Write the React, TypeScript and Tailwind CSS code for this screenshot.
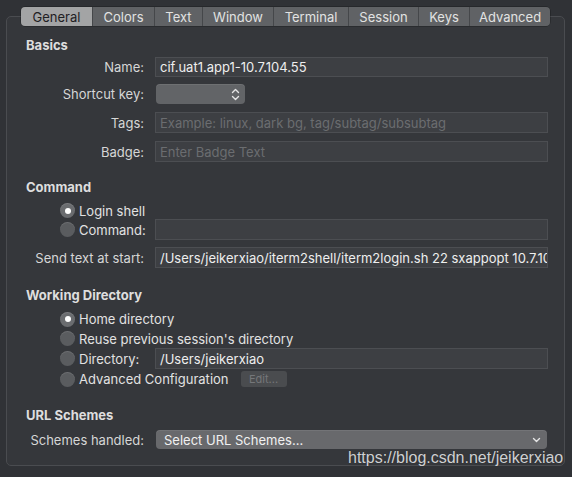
import React from "react";

const tabs: { name: string; w: string; active?: boolean }[] = [
  { name: "General", w: "w-[71px]", active: true },
  { name: "Colors", w: "w-[62px]" },
  { name: "Text", w: "w-[48px]" },
  { name: "Window", w: "w-[71px]" },
  { name: "Terminal", w: "w-[75px]" },
  { name: "Session", w: "w-[70px]" },
  { name: "Keys", w: "w-[51px]" },
  { name: "Advanced", w: "w-[81px]" },
];

function Radio({ checked }: { checked?: boolean }) {
  return (
    <div
      className={`w-[15px] h-[15px] rounded-full flex items-center justify-center shrink-0 ${
        checked ? "bg-[#6a6c6f]" : "bg-[#5a5c5f]"
      } shadow-[inset_0_1px_0_rgba(255,255,255,0.12)]`}
    >
      {checked && <div className="w-[6px] h-[6px] rounded-full bg-white" />}
    </div>
  );
}

function Field({ value, placeholder, h = "h-[21px]" }: { value?: string; placeholder?: string; h?: string }) {
  return (
    <div
      className={`flex-1 ${h} bg-[#3d3f43] border border-[#4c4e52] flex items-center px-[4px] overflow-hidden whitespace-nowrap`}
    >
      {value ? (
        <span className="text-[#eeeeee]">{value}</span>
      ) : (
        <span className="text-[#6b6d70]">{placeholder}</span>
      )}
    </div>
  );
}

function Label({ children }: { children: React.ReactNode }) {
  return <div className="w-[137px] text-right pr-0 text-[#d6d6d6] shrink-0">{children}</div>;
}

function Header({ children, mt }: { children: React.ReactNode; mt: string }) {
  return <div className={`${mt} h-[16px] leading-[16px] pl-[19px] font-bold text-[#dedede]`}>{children}</div>;
}

export default function App() {
  return (
    <div
      className="w-[572px] h-[477px] bg-[#303236] relative overflow-hidden text-[13px] leading-[16px]"
      style={{ fontFamily: "Inter, 'Liberation Sans', sans-serif" }}
    >
      <div className="pt-[16px] pl-[6px]">
        <div className="relative w-[559px] h-[450px] border border-[#4a4c50] rounded-[5px] bg-[#35373b]">
          {/* tabs */}
          <div className="absolute left-[14px] top-[-10px] flex h-[19px] rounded-[4px] overflow-hidden shadow-[0_0_0_0.5px_rgba(0,0,0,0.4)]">
            {tabs.map((t, i) => (
              <div
                key={t.name}
                className={`${t.w} h-full flex items-center justify-center ${
                  t.active ? "bg-[#a3a4a5] text-[#1f2023]" : "bg-[#606265] text-[#e2e2e2]"
                } ${i > 0 ? "border-l border-[#45474a]" : ""}`}
              >
                {t.name}
              </div>
            ))}
          </div>

          <div className="flex flex-col">
            <Header mt="mt-[20px]">Basics</Header>

            <div className="mt-[4px] h-[20px] flex items-center pr-[16px]">
              <Label>Name:</Label>
              <div className="w-[11px]" />
              <Field value="cif.uat1.app1-10.7.104.55" h="h-[20px]" />
            </div>

            <div className="mt-[7px] h-[20px] flex items-center pr-[16px]">
              <Label>Shortcut key:</Label>
              <div className="w-[12px]" />
              <div className="w-[89px] h-[20px] rounded-[4px] bg-[#626467] flex items-center justify-end pr-[5px] shadow-[inset_0_1px_0_rgba(255,255,255,0.08)]">
                <svg width="9" height="13" viewBox="0 0 9 13" fill="none" stroke="#e6e6e6" strokeWidth="1.4" strokeLinecap="round" strokeLinejoin="round">
                  <path d="M1.5 4.5 L4.5 1.5 L7.5 4.5" />
                  <path d="M1.5 8.5 L4.5 11.5 L7.5 8.5" />
                </svg>
              </div>
            </div>

            <div className="mt-[8px] h-[21px] flex items-center pr-[16px]">
              <Label>Tags:</Label>
              <div className="w-[11px]" />
              <Field placeholder="Example: linux, dark bg, tag/subtag/subsubtag" />
            </div>

            <div className="mt-[8px] h-[21px] flex items-center pr-[16px]">
              <Label>Badge:</Label>
              <div className="w-[11px]" />
              <Field placeholder="Enter Badge Text" />
            </div>

            <Header mt="mt-[17px]">Command</Header>

            <div className="mt-[7px] h-[17px] flex items-center pl-[53px] gap-[4px] text-[#e2e2e2]">
              <Radio checked />
              <span>Login shell</span>
            </div>

            <div className="h-[21px] flex items-center pr-[16px]">
              <div className="w-[137px] flex items-center pl-[53px] gap-[4px] text-[#e2e2e2]">
                <Radio />
                <span>Command:</span>
              </div>
              <div className="w-[11px]" />
              <Field placeholder="" />
            </div>

            <div className="mt-[7px] h-[21px] flex items-center pr-[16px]">
              <Label>Send text at start:</Label>
              <div className="w-[11px]" />
              <Field value="/Users/jeikerxiao/iterm2shell/iterm2login.sh 22 sxappopt 10.7.104.55" />
            </div>

            <Header mt="mt-[19px]">Working Directory</Header>

            <div className="mt-[6px] h-[20px] flex items-center pl-[53px] gap-[4px] text-[#e2e2e2]">
              <Radio checked />
              <span>Home directory</span>
            </div>
            <div className="h-[19px] flex items-center pl-[53px] gap-[4px] text-[#e2e2e2]">
              <Radio />
              <span>Reuse previous session's directory</span>
            </div>
            <div className="h-[21px] flex items-center pr-[16px]">
              <div className="w-[137px] flex items-center pl-[53px] gap-[4px] text-[#e2e2e2]">
                <Radio />
                <span>Directory:</span>
              </div>
              <div className="w-[11px]" />
              <Field value="/Users/jeikerxiao" />
            </div>
            <div className="h-[20px] flex items-center pl-[53px] gap-[4px] text-[#e2e2e2]">
              <Radio />
              <span>Advanced Configuration</span>
              <div className="ml-[8px] w-[46px] h-[16px] rounded-[3px] bg-[#4a4c4f] text-[#75777a] text-[11px] flex items-center justify-center">
                Edit...
              </div>
            </div>

            <Header mt="mt-[18px]">URL Schemes</Header>

            <div className="mt-[7px] h-[19px] flex items-center pr-[17px]">
              <Label>Schemes handled:</Label>
              <div className="w-[12px]" />
              <div className="flex-1 h-[19px] rounded-[4px] bg-[#68696c] flex items-center justify-between pl-[8px] pr-[6px] text-[#f0f0f0] shadow-[inset_0_1px_0_rgba(255,255,255,0.08)]">
                <span>Select URL Schemes...</span>
                <svg width="9" height="6" viewBox="0 0 9 6" fill="none" stroke="#e6e6e6" strokeWidth="1.4" strokeLinecap="round" strokeLinejoin="round">
                  <path d="M1.5 1.5 L4.5 4.5 L7.5 1.5" />
                </svg>
              </div>
            </div>
          </div>
        </div>
      </div>

      <div
        className="absolute left-[348px] top-[449px] text-[16px] leading-[18px] text-[#cfd0d2] tracking-[0px]"
        style={{ fontFamily: "'Liberation Sans', Arial, sans-serif", textShadow: "0 0 1px rgba(0,0,0,0.3)" }}
      >
        https://blog.csdn.net/jeikerxiao
      </div>
    </div>
  );
}
